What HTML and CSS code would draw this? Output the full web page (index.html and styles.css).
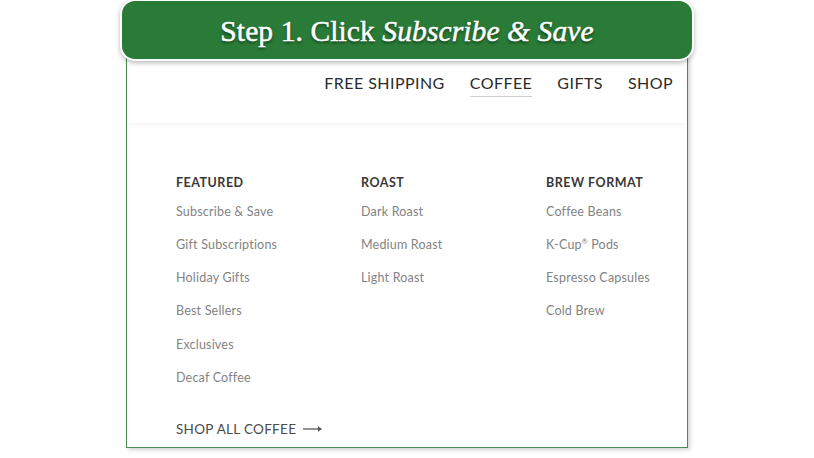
FILE: index.html
```html
<!DOCTYPE html>
<html>
<head>
<meta charset="utf-8">
<link rel="stylesheet" href="styles.css">
</head>
<body>
<div class="page">
  <div class="banner">
    <h1 class="banner-title">Step 1. Click <em>Subscribe &amp; Save</em></h1>
  </div>
  <div class="frame">
    <header class="header">
      <nav class="nav">
        <a class="nav-item">FREE SHIPPING</a>
        <a class="nav-item active">COFFEE</a>
        <a class="nav-item">GIFTS</a>
        <a class="nav-item">SHOP</a>
      </nav>
    </header>
    <section class="menu">
      <div class="columns">
        <div class="col">
          <h2 class="col-title">FEATURED</h2>
          <ul class="links">
            <li>Subscribe &amp; Save</li>
            <li>Gift Subscriptions</li>
            <li>Holiday Gifts</li>
            <li>Best Sellers</li>
            <li>Exclusives</li>
            <li>Decaf Coffee</li>
          </ul>
        </div>
        <div class="col">
          <h2 class="col-title">ROAST</h2>
          <ul class="links">
            <li>Dark Roast</li>
            <li>Medium Roast</li>
            <li>Light Roast</li>
          </ul>
        </div>
        <div class="col">
          <h2 class="col-title">BREW FORMAT</h2>
          <ul class="links">
            <li>Coffee Beans</li>
            <li>K-Cup<sup class="reg">®</sup> Pods</li>
            <li>Espresso Capsules</li>
            <li>Cold Brew</li>
          </ul>
        </div>
      </div>
      <a class="shop-all">SHOP ALL COFFEE <span class="arrow"><svg width="20" height="8" viewBox="0 0 20 8"><path d="M0 4H18" stroke="#555" stroke-width="1.3" fill="none"/><path d="M15 1.2L19 4L15 6.8Z" fill="#555"/></svg></span></a>
    </section>
  </div>
</div>
</body>
</html>
```

FILE: styles.css
```css
html, body {
  margin: 0;
  padding: 0;
  background: #ffffff;
}
body {
  font-family: Lato, "Open Sans", sans-serif;
  width: 814px;
  height: 458px;
  overflow: hidden;
}
.page {
  padding-top: 1px;
  padding-left: 122px;
}
.banner {
  position: relative;
  z-index: 2;
  width: 570px;
  height: 58px;
  border-radius: 13px;
  background: #2a7b37;
  box-shadow: 0 0 0 2px #ffffff, 0 2px 5px 2px rgba(0, 0, 0, 0.28);
  display: flex;
  align-items: center;
  justify-content: center;
}
.banner-title {
  margin: 0;
  font-family: "Liberation Serif", "DejaVu Serif", serif;
  font-weight: normal;
  font-size: 29.5px;
  color: #ffffff;
  -webkit-text-stroke: 0.5px #ffffff;
  text-shadow: 0 2px 3px rgba(0, 0, 0, 0.55);
  padding-top: 2px;
  letter-spacing: 0.1px;
}
.banner-title em {
  font-style: italic;
}
.frame {
  margin-top: -4px;
  margin-left: 4px;
  width: 562px;
  height: 393px;
  box-sizing: border-box;
  border: 1.5px solid #4b8d53;
  border-top: none;
  box-shadow: 2px 2px 4px rgba(0, 0, 0, 0.18);
  background: #fff;
}
.header {
  height: 68px;
  box-shadow: 0 2px 4px rgba(0, 0, 0, 0.045);
  display: flex;
  justify-content: flex-end;
}
.nav {
  display: flex;
  gap: 25px;
  padding-top: 17px;
  padding-right: 14px;
}
.nav-item {
  font-size: 16px;
  letter-spacing: 0.45px;
  color: #2b2b2b;
  line-height: 22px;
  height: 24px;
}
.nav-item.active {
  border-bottom: 1px solid #cfcfcf;
}
.menu {
  padding-top: 52px;
  padding-left: 49px;
}
.columns {
  display: flex;
}
.col {
  width: 185px;
  flex-shrink: 0;
}
.col-title {
  margin: 0 0 5px 0;
  font-size: 12.5px;
  line-height: 15px;
  font-weight: 700;
  letter-spacing: 0.5px;
  color: #383838;
}
.links {
  list-style: none;
  margin: 0;
  padding: 0;
}
.links li {
  font-size: 12.5px;
  line-height: 33px;
  color: #838383;
  letter-spacing: 0.2px;
}
.links li:nth-child(n+5) {
  position: relative;
  top: 0.5px;
}
.reg {
  font-size: 7px;
  vertical-align: 5px;
  line-height: 0;
}
.shop-all {
  display: flex;
  align-items: center;
  gap: 7px;
  margin-top: 26px;
  font-size: 13.5px;
  line-height: 20px;
  letter-spacing: 0.3px;
  color: #4a4a4a;
}
.arrow {
  display: flex;
  align-items: center;
}
```
